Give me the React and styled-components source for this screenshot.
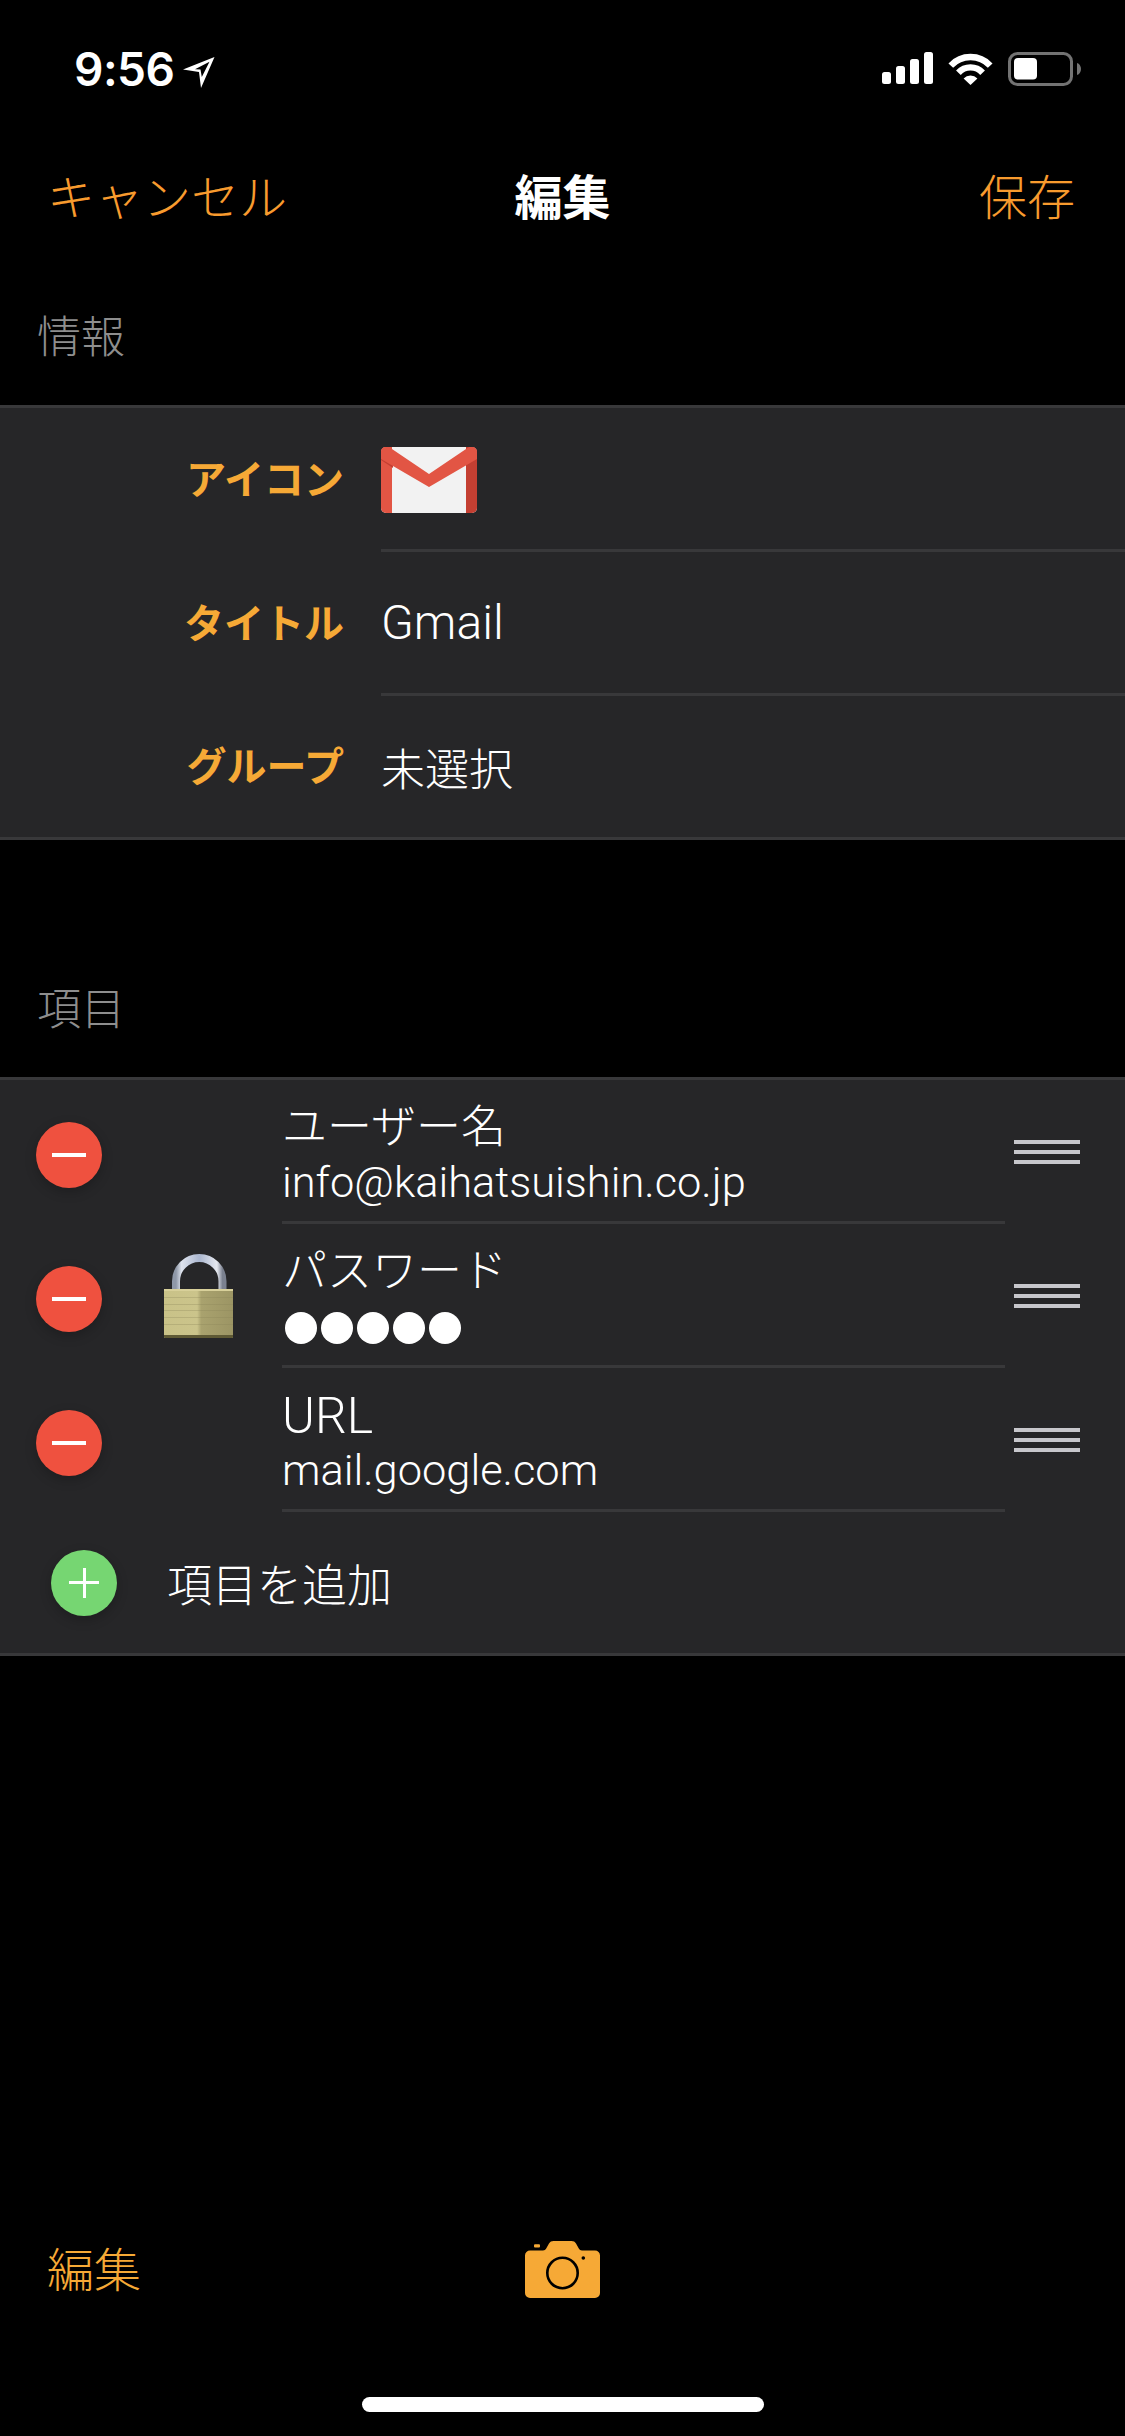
import React from 'react'
import styled, { createGlobalStyle } from 'styled-components'

const sans = `Roboto, "Noto Sans CJK JP", sans-serif`
const orange = '#f89b2e'
const amber = '#f6a936'

const GlobalStyle = createGlobalStyle`
  html, body {
    margin: 0;
    padding: 0;
    background: #000;
  }
  * {
    box-sizing: border-box;
  }
`

const Phone = styled.div`
  width: 1125px;
  height: 2436px;
  display: flex;
  flex-direction: column;
  background: #000;
  color: #fff;
  font-family: ${sans};
  overflow: hidden;
`

const StatusBar = styled.div`
  height: 132px;
  padding: 52px 44px 0 74px;
  display: flex;
  justify-content: space-between;
  align-items: flex-start;
`

const TimeGroup = styled.div`
  display: flex;
  align-items: flex-start;
  gap: 9px;
`

const Time = styled.span`
  font-family: Inter, sans-serif;
  font-size: 46px;
  font-weight: 600;
  line-height: 34px;
  letter-spacing: -0.5px;
`

const StatusIcons = styled.div`
  display: flex;
  align-items: flex-start;
  gap: 15px;
`

const NavBar = styled.div`
  height: 132px;
  padding: 2px 50px 0 47px;
  display: grid;
  grid-template-columns: 1fr auto 1fr;
  align-items: center;
`

const NavAction = styled.span`
  font-size: 48px;
  font-weight: 300;
  line-height: 1;
  color: ${orange};
  text-align: ${p => (p.$end ? 'right' : 'left')};
`

const NavTitle = styled.span`
  margin-left: 3px;
  font-size: 48px;
  font-weight: 700;
  line-height: 1;
`

const SectionLabel = styled.div`
  height: ${p => p.$height}px;
  padding: 0 0 45px 37px;
  display: flex;
  align-items: flex-end;
  font-size: 44px;
  font-weight: 300;
  line-height: 1;
  color: #8e8e8e;
`

const Panel = styled.section`
  background: #262628;
  border-top: 3px solid #38383a;
  border-bottom: 3px solid #38383a;
`

const InfoRow = styled.div`
  height: ${p => (p.$last ? 141 : 144)}px;
  display: flex;
  align-items: stretch;
`

const InfoLabel = styled.span`
  width: 344px;
  margin-right: 37px;
  padding-bottom: 6px;
  flex-shrink: 0;
  align-self: center;
  text-align: right;
  font-size: 40px;
  font-weight: 700;
  color: ${amber};
`

const InfoValue = styled.div`
  flex: 1;
  display: flex;
  align-items: center;
  font-size: ${p => (p.$cjk ? 44 : 48)}px;
  font-weight: 300;
  border-bottom: ${p => (p.$last ? 'none' : '3px solid #38383a')};
`

const ItemGrid = styled.div`
  display: grid;
  grid-template-columns: 282px 723px 120px;
  grid-auto-rows: 144px;
`

const DeleteCell = styled.div`
  grid-column: 1;
  grid-row: ${p => p.$row};
  padding: 6px 0 0 36px;
  display: flex;
  align-items: center;
`

const RoundButton = styled.span`
  position: relative;
  width: 66px;
  height: 66px;
  border-radius: 50%;
  background: ${p => (p.$add ? '#76d672' : '#ef513f')};
  box-shadow: 0 4px 12px rgba(0, 0, 0, 0.22);

  &::before {
    content: '';
    position: absolute;
    left: ${p => (p.$add ? 18 : 16)}px;
    right: ${p => (p.$add ? 18 : 16)}px;
    top: 31px;
    height: ${p => (p.$add ? 3 : 4)}px;
    background: #fff;
  }

  ${p => p.$add && `
    &::after {
      content: '';
      position: absolute;
      top: 18px;
      bottom: 18px;
      left: 31.5px;
      width: 3px;
      background: #fff;
    }
  `}
`

const LockCell = styled.div`
  grid-column: 1;
  grid-row: 1 / 4;
  justify-self: start;
  align-self: center;
  margin-left: 164px;
  display: flex;
`

const ItemText = styled.div`
  grid-column: 2;
  grid-row: ${p => p.$row};
  padding-top: 20px;
  border-bottom: 3px solid #38383a;
`

const ItemName = styled.div`
  font-size: ${p => (p.$latin ? 50 : 45)}px;
  font-weight: 300;
  line-height: 56px;
`

const ItemValue = styled.div`
  font-size: 43.4px;
  font-weight: 300;
  line-height: 54px;
`

const Dots = styled.div`
  display: flex;
  gap: 4px;
  height: 56px;
  align-items: center;
  padding-left: 3px;
`

const Dot = styled.span`
  width: 32px;
  height: 32px;
  border-radius: 50%;
  background: #fff;
`

const HandleCell = styled.div`
  grid-column: 3;
  grid-row: ${p => p.$row};
  padding: 60px 0 0 9px;
  display: flex;
  flex-direction: column;
  gap: 6px;
`

const HandleLine = styled.span`
  width: 66px;
  height: 4px;
  background: #c7c7cc;
`

const AddRow = styled.div`
  height: 141px;
  padding-left: 51px;
  display: flex;
  align-items: center;
  gap: 50px;
  font-size: 45px;
  font-weight: 300;
`

const Toolbar = styled.div`
  margin-top: auto;
  height: 132px;
  padding: 2px 50px 0 47px;
  display: grid;
  grid-template-columns: 1fr auto 1fr;
  align-items: center;
`

const ToolbarAction = styled.span`
  font-size: 47px;
  font-weight: 300;
  line-height: 1;
  color: ${amber};
`

const CameraSlot = styled.span`
  display: flex;
  margin-left: 3px;
  margin-top: -2px;
`

const HomeArea = styled.div`
  height: 101px;
  padding-top: 62px;
  display: flex;
  justify-content: center;
`

const HomeBar = styled.span`
  width: 402px;
  height: 15px;
  border-radius: 8px;
  background: #fff;
`

const GmailSlot = styled.span`
  display: flex;
  margin-top: 3px;
`

const ArrowSlot = styled.span`
  display: flex;
  margin-top: 4px;
`

const LocationArrow = () => (
  <ArrowSlot>
    <svg width="32" height="33" viewBox="0 0 32 33">
      <path d="M0 13.500 31.500 1 18 32 16 16zM12 13.200 17.500 13.500 18.800 21 26.500 5.800z" fill="#fff" fillRule="evenodd" />
    </svg>
  </ArrowSlot>
)

const SignalIcon = () => (
  <svg width="51" height="33" viewBox="0 0 51 33">
    <rect x="0" y="20" width="9" height="12" rx="2.500" fill="#fff" />
    <rect x="14" y="14" width="9" height="18" rx="2.500" fill="#fff" />
    <rect x="28" y="7" width="9" height="25" rx="2.500" fill="#fff" />
    <rect x="42" y="0" width="9" height="32" rx="2.500" fill="#fff" />
  </svg>
)

const WifiIcon = () => (
  <svg width="45" height="33" viewBox="0 0 45 33">
    <path d="M2.800 13.600A27 27 0 0 1 42.200 13.600" fill="none" stroke="#fff" strokeWidth="6.400" />
    <path d="M10.400 20.700A16.500 16.500 0 0 1 34.600 20.700" fill="none" stroke="#fff" strokeWidth="6.400" />
    <path d="M22.500 33 15.600 26.500A9.500 9.500 0 0 1 29.400 26.500z" fill="#fff" />
  </svg>
)

const BatteryIcon = () => (
  <svg width="73" height="34" viewBox="0 0 73 34">
    <rect x="1.500" y="1.500" width="62" height="31" rx="8" fill="none" stroke="#737373" strokeWidth="3" />
    <rect x="6" y="6" width="23" height="21.500" rx="4" fill="#fff" />
    <path d="M69 11c2.500.8 4 3 4 6s-1.500 5.200-4 6z" fill="#737373" />
  </svg>
)

const GmailIcon = () => (
  <svg width="96" height="66" viewBox="0 0 96 66">
    <rect width="96" height="66" rx="5" fill="#f2f2f2" />
    <path d="M0 5a5 5 0 0 1 5-5h6v66H5a5 5 0 0 1-5-5z" fill="#e25544" />
    <path d="M85 0h6a5 5 0 0 1 5 5v56a5 5 0 0 1-5 5h-6z" fill="#c43f32" />
    <path d="M0 6 12 14v7L0 13z" fill="#c43f32" />
    <path d="M4 0h4L48 27 88 0h3a5 5 0 0 1 5 5v7L48 40 0 12V5a5 5 0 0 1 4-5z" fill="#e25544" />
  </svg>
)

const PadlockIcon = () => (
  <svg width="69" height="84" viewBox="0 0 69 84">
    <defs>
      <linearGradient id="shackle" x1="0" x2="1" y1="0" y2="0">
        <stop offset="0" stopColor="#8f98a8" />
        <stop offset="0.12" stopColor="#dfe4ee" />
        <stop offset="0.5" stopColor="#aab6cf" />
        <stop offset="0.88" stopColor="#e6e9f0" />
        <stop offset="1" stopColor="#7b8190" />
      </linearGradient>
      <linearGradient id="brass" x1="0" x2="1" y1="0" y2="0">
        <stop offset="0" stopColor="#c9c288" />
        <stop offset="0.48" stopColor="#cbc48b" />
        <stop offset="0.54" stopColor="#a9a26e" />
        <stop offset="1" stopColor="#9c9564" />
      </linearGradient>
    </defs>
    <path d="M12 36V27.250A23.250 23.250 0 0 1 58.500 27.250V36" fill="none" stroke="url(#shackle)" strokeWidth="8" />
    <rect x="0" y="35" width="69" height="49" rx="1" fill="url(#brass)" />
    <rect x="0" y="35" width="69" height="2" fill="#d8d09a" />
    <g fill="#8a8458" opacity="0.3">
      <rect x="0" y="43" width="69" height="1" />
      <rect x="0" y="50" width="69" height="1" />
      <rect x="0" y="56" width="69" height="1" />
      <rect x="0" y="63" width="69" height="1" />
      <rect x="0" y="70" width="69" height="1" />
    </g>
    <path d="M0 81h69v2a1 1 0 0 1-1 1H1a1 1 0 0 1-1-1z" fill="#5f5a35" />
  </svg>
)

const CameraIcon = () => (
  <svg width="75" height="57" viewBox="0 0 75 57">
    <path
      d="M5 9.500h13c1.500 0 2.500-.8 3.200-2L24 2.500C25 .8 26.500 0 28.500 0h18c2 0 3.500.8 4.500 2.500l2.800 5c.7 1.200 1.700 2 3.200 2h13a5 5 0 0 1 5 5V52a5 5 0 0 1-5 5H5a5 5 0 0 1-5-5V14.500a5 5 0 0 1 5-5z"
      fill={amber}
    />
    <rect x="9" y="3.200" width="6" height="3.400" rx="1" fill={amber} />
    <circle cx="37.500" cy="32" r="15.200" fill="none" stroke="#000" strokeWidth="2.600" />
    <circle cx="58.300" cy="17" r="1.800" fill="#000" />
  </svg>
)

const info = [
  { label: 'アイコン', value: <GmailSlot><GmailIcon /></GmailSlot> },
  { label: 'タイトル', value: 'Gmail' },
  { label: 'グループ', value: '未選択', cjk: true },
]

const items = [
  { name: 'ユーザー名', value: 'info@kaihatsuishin.co.jp' },
  { name: 'パスワード', dots: 5 },
  { name: 'URL', latin: true, value: 'mail.google.com' },
]

const App = () => {
  return (
    <Phone>
      <GlobalStyle />
      <StatusBar>
        <TimeGroup>
          <Time>9:56</Time>
          <LocationArrow />
        </TimeGroup>
        <StatusIcons>
          <SignalIcon />
          <WifiIcon />
          <BatteryIcon />
        </StatusIcons>
      </StatusBar>

      <NavBar>
        <NavAction>キャンセル</NavAction>
        <NavTitle>編集</NavTitle>
        <NavAction $end>保存</NavAction>
      </NavBar>

      <SectionLabel $height={141}>情報</SectionLabel>
      <Panel>
        {info.map((row, i) => (
          <InfoRow key={row.label} $last={i === info.length - 1}>
            <InfoLabel>{row.label}</InfoLabel>
            <InfoValue $last={i === info.length - 1} $cjk={row.cjk}>{row.value}</InfoValue>
          </InfoRow>
        ))}
      </Panel>

      <SectionLabel $height={237}>項目</SectionLabel>
      <Panel>
        <ItemGrid>
          <LockCell>
            <PadlockIcon />
          </LockCell>
          {items.map((item, i) => (
            <React.Fragment key={item.name}>
              <DeleteCell $row={i + 1}>
                <RoundButton />
              </DeleteCell>
              <ItemText $row={i + 1}>
                <ItemName $latin={item.latin}>{item.name}</ItemName>
                {item.dots ? (
                  <Dots>
                    {Array.from({ length: item.dots }).map((_, n) => (
                      <Dot key={n} />
                    ))}
                  </Dots>
                ) : (
                  <ItemValue>{item.value}</ItemValue>
                )}
              </ItemText>
              <HandleCell $row={i + 1}>
                <HandleLine />
                <HandleLine />
                <HandleLine />
              </HandleCell>
            </React.Fragment>
          ))}
        </ItemGrid>
        <AddRow>
          <RoundButton $add />
          項目を追加
        </AddRow>
      </Panel>

      <Toolbar>
        <ToolbarAction>編集</ToolbarAction>
        <CameraSlot>
          <CameraIcon />
        </CameraSlot>
        <span />
      </Toolbar>
      <HomeArea>
        <HomeBar />
      </HomeArea>
    </Phone>
  )
}

export default App
